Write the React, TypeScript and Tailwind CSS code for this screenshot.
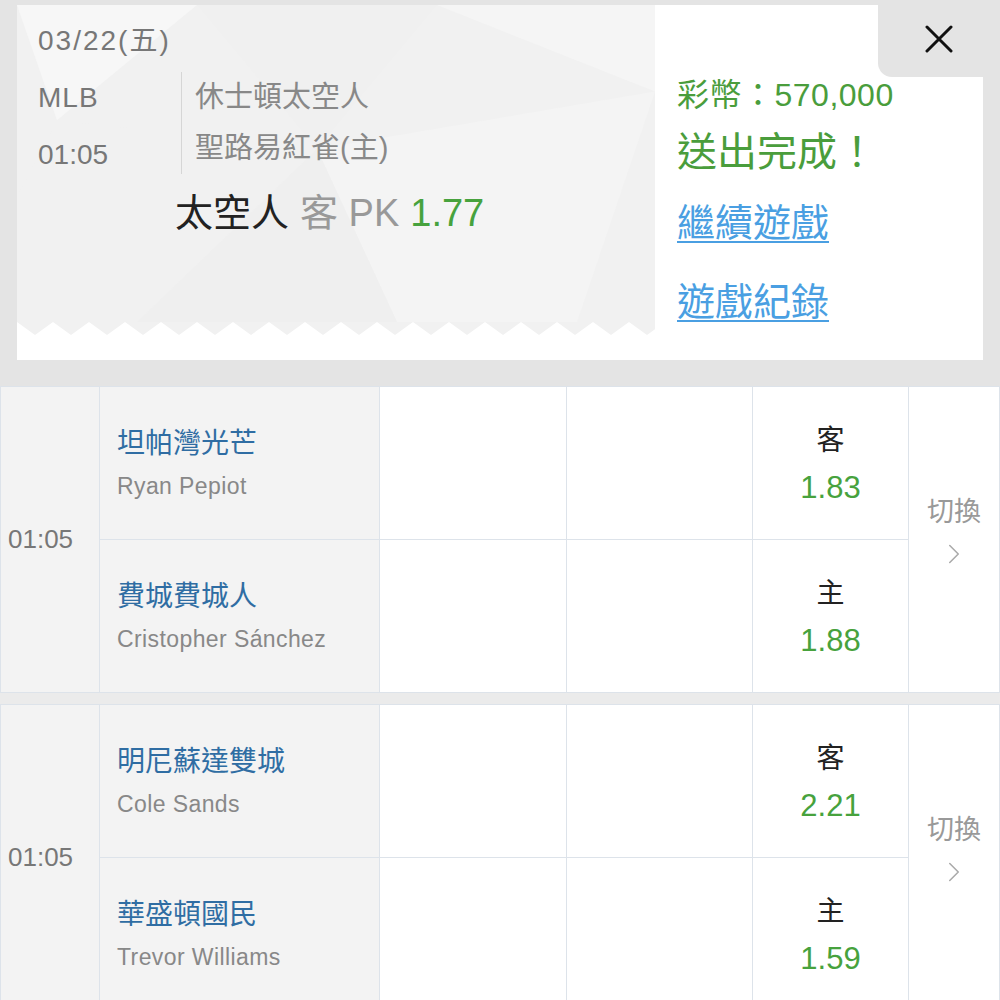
import React from "react";
import { ChevronRight } from "lucide-react";

const FONT = {
  fontFamily: '"Liberation Sans", "Noto Sans CJK TC", sans-serif',
};

type Team = { name: string; pitcher: string; side: string; odds: string };

const games: { time: string; teams: Team[] }[] = [
  {
    time: "01:05",
    teams: [
      { name: "坦帕灣光芒", pitcher: "Ryan Pepiot", side: "客", odds: "1.83" },
      { name: "費城費城人", pitcher: "Cristopher Sánchez", side: "主", odds: "1.88" },
    ],
  },
  {
    time: "01:05",
    teams: [
      { name: "明尼蘇達雙城", pitcher: "Cole Sands", side: "客", odds: "2.21" },
      { name: "華盛頓國民", pitcher: "Trevor Williams", side: "主", odds: "1.59" },
    ],
  },
];

// faint polygon texture behind the ticket
const TicketTexture = () => (
  <svg className="absolute inset-0 w-full h-full" viewBox="0 0 638 330" preserveAspectRatio="none">
    <polygon points="0,0 180,0 40,120" fill="#f7f7f7" />
    <polygon points="180,0 420,0 300,150" fill="#f0f0f0" />
    <polygon points="420,0 638,0 638,90" fill="#f5f5f5" />
    <polygon points="40,120 300,150 120,330 0,330 0,200" fill="#f1f1f1" />
    <polygon points="300,150 638,90 560,330 380,330" fill="#f4f4f4" />
    <polygon points="120,330 300,150 380,330" fill="#efefef" />
  </svg>
);

const Zigzag = () => {
  const pts: string[] = ["0,0"];
  for (let x = 0; x <= 648; x += 36) {
    pts.push(`${x},0`, `${x + 18},13`);
  }
  pts.push("648,0");
  return (
    <svg className="block w-[638px] h-[13px]" viewBox="0 0 638 13">
      <polygon points={pts.join(" ")} fill="#f1f1f1" />
    </svg>
  );
};

const GameGroup = ({ time, teams }: { time: string; teams: Team[] }) => (
  <div className="flex h-[307px] border-y border-[#dde3ea]">
    <div className="w-[100px] shrink-0 flex items-center pl-[7px] bg-[#f3f3f3] border-x border-[#dde3ea] text-[26px] text-[#777]">
      {time}
    </div>
    <div className="flex flex-col">
      {teams.map((t, i) => (
        <div key={t.name} className={`flex flex-1 ${i === 0 ? "border-b border-[#dde3ea]" : ""}`}>
          <div className="w-[280px] bg-[#f3f3f3] border-r border-[#dde3ea] pl-[17px] pt-[39px]">
            <div className="h-[36px] leading-[36px] text-[28px] text-[#2f6da3]">{t.name}</div>
            <div className="mt-[10px] h-[28px] leading-[28px] text-[23px] tracking-[0.4px] text-[#888]">
              {t.pitcher}
            </div>
          </div>
          <div className="w-[187px] bg-white border-r border-[#dde3ea]" />
          <div className="w-[186px] bg-white border-r border-[#dde3ea]" />
          <div className="w-[156px] bg-white border-r border-[#dde3ea] flex flex-col items-center pt-[37px]">
            <div className="h-[34px] leading-[34px] text-[28px] text-[#222]">{t.side}</div>
            <div className="mt-[12px] h-[36px] leading-[36px] text-[31px] text-[#47a23d]">{t.odds}</div>
          </div>
        </div>
      ))}
    </div>
    <div className="flex-1 bg-white border-r border-[#dde3ea] flex flex-col items-center justify-center pb-[14px]">
      <div className="h-[34px] leading-[34px] text-[27px] text-[#999]">切換</div>
      <ChevronRight size={34} strokeWidth={1.1} color="#aaa" className="mt-[8px]" />
    </div>
  </div>
);

export default function App() {
  return (
    <div className="w-[1000px] h-[1000px] overflow-hidden bg-white" style={FONT}>
      {/* result card */}
      <div className="relative h-[386px] bg-[#e4e4e4] pt-[5px] px-[17px]">
        <div className="flex h-[355px] bg-white">
          <div className="w-[638px] flex flex-col">
            <div className="relative h-[317px] bg-[#f1f1f1]">
              <TicketTexture />
              <div className="relative pt-[18px] pl-[21px]">
                <div className="h-[36px] leading-[36px] text-[28px] tracking-[2px] text-[#777]">03/22(五)</div>
                <div className="flex items-start mt-[13px]">
                  <div className="w-[143px] flex flex-col text-[28px] text-[#777]">
                    <div className="h-[52px] leading-[52px] tracking-[1px]">MLB</div>
                    <div className="mt-[5px] h-[52px] leading-[52px]">01:05</div>
                  </div>
                  <div className="border-l border-[#d6d6d6] pl-[13px] text-[29px] text-[#888]">
                    <div className="h-[51px] leading-[51px]">休士頓太空人</div>
                    <div className="h-[51px] leading-[51px]">聖路易紅雀(主)</div>
                  </div>
                </div>
                <div className="mt-[9px] pl-[137px] h-[46px] leading-[46px] text-[38px] flex gap-[11px]">
                  <span className="text-[#222]">太空人</span>
                  <span className="text-[#999]">客 PK</span>
                  <span className="text-[#47a23d]">1.77</span>
                </div>
              </div>
            </div>
            <Zigzag />
          </div>
          <div className="flex-1 pl-[22px] pt-[70px]">
            <div className="h-[40px] leading-[40px] text-[32px] tracking-[0.5px] text-[#4a9d3c]">彩幣：570,000</div>
            <div className="mt-[12px] h-[50px] leading-[50px] text-[40px] text-[#4a9d3c]">送出完成！</div>
            <div className="mt-[22px] h-[48px] leading-[48px] text-[38px] text-[#4a9fe2] underline decoration-2 underline-offset-[5px]">
              繼續遊戲
            </div>
            <div className="mt-[31px] h-[48px] leading-[48px] text-[38px] text-[#4a9fe2] underline decoration-2 underline-offset-[5px]">
              遊戲紀錄
            </div>
          </div>
        </div>
        <button className="absolute right-0 top-0 w-[122px] h-[77px] bg-[#e4e4e4] rounded-bl-[14px] flex items-center justify-center">
          <svg width="28" height="28" viewBox="0 0 28 28">
            <path d="M2 2 L26 26 M26 2 L2 26" stroke="#111" strokeWidth="3" strokeLinecap="round" />
          </svg>
        </button>
      </div>

      {/* games */}
      <GameGroup {...games[0]} />
      <div className="h-[11px] bg-[#ebebeb]" />
      <GameGroup {...games[1]} />
    </div>
  );
}
